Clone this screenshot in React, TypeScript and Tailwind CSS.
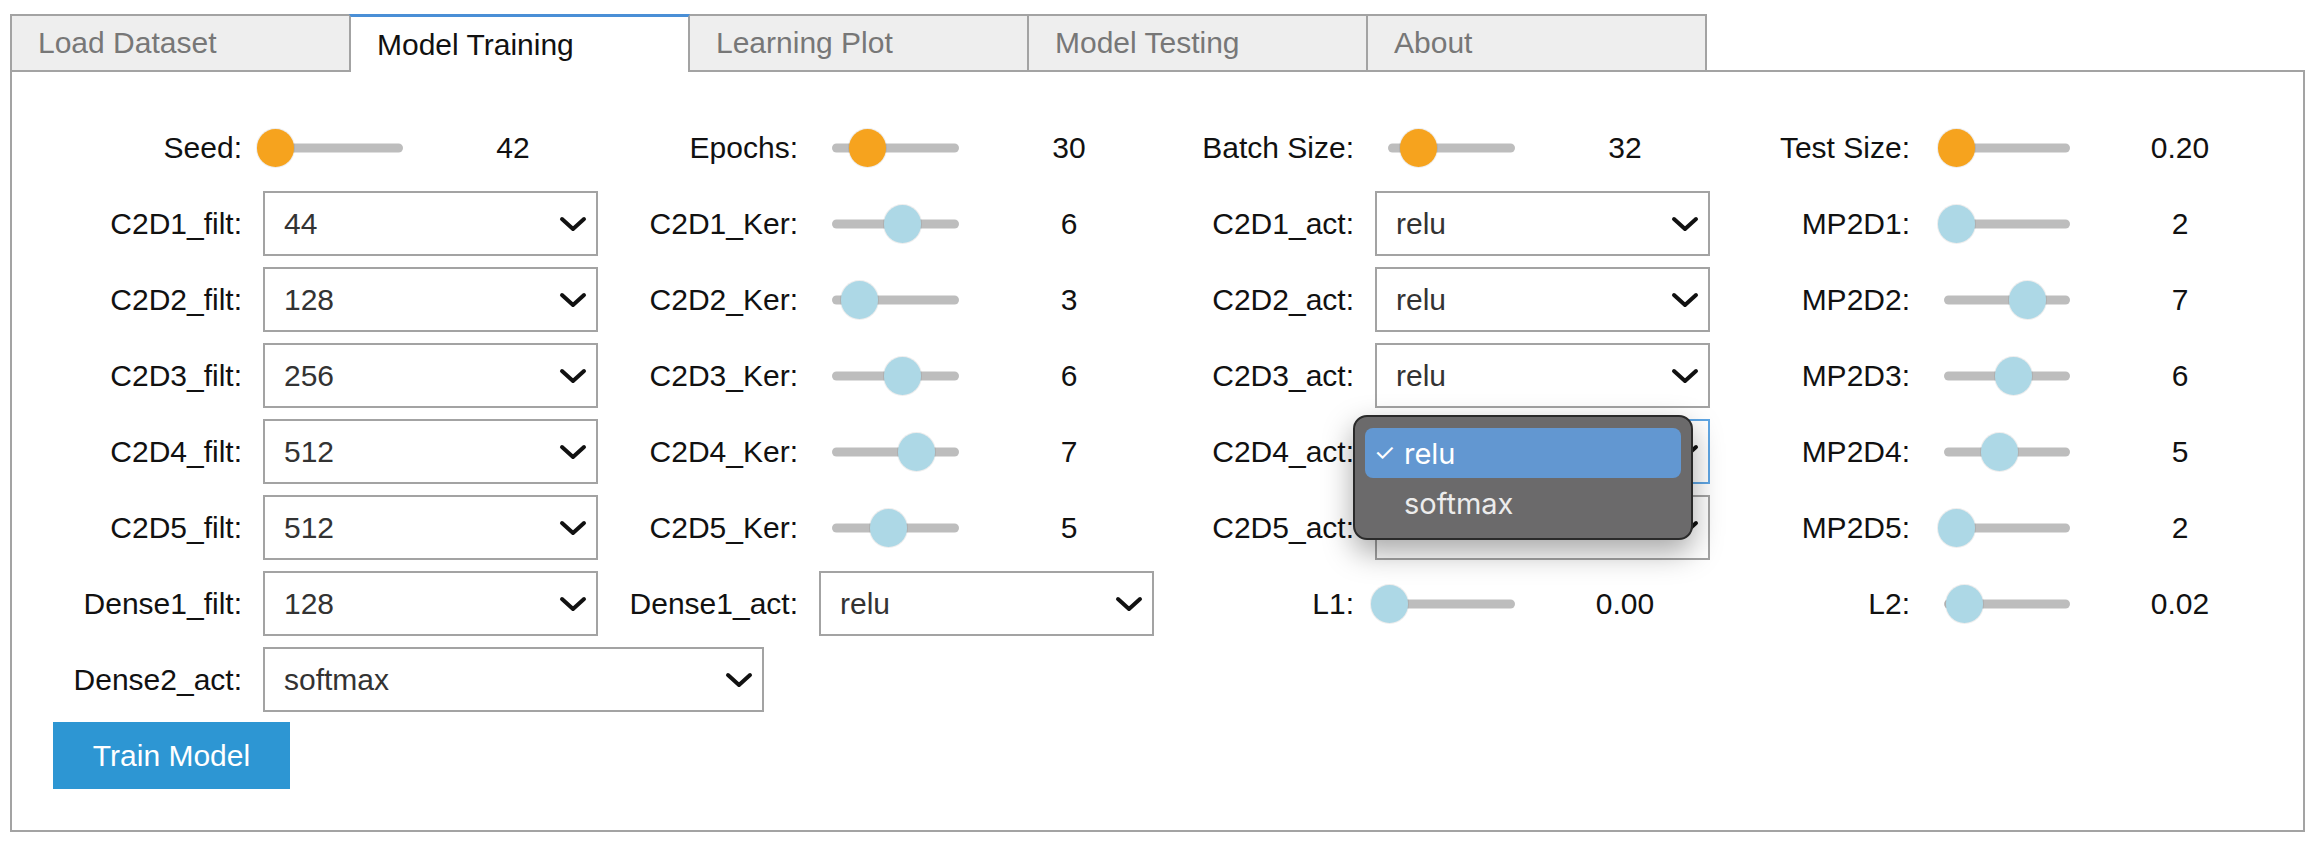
import React from "react";

const FONT = '"Liberation Sans", Arial, Helvetica, sans-serif';
const POPFONT = 'Inter, "Liberation Sans", Arial, sans-serif';

function Chevron() {
  return (
    <svg width="28" height="18" viewBox="0 0 28 18" className="shrink-0">
      <polyline
        points="3,4 14,14 25,4"
        fill="none"
        stroke="#111"
        strokeWidth="4"
        strokeLinecap="round"
        strokeLinejoin="round"
      />
    </svg>
  );
}

type SliderProps = {
  label: string;
  trackClass: string;
  thumb: number;
  value: string;
  orange?: boolean;
};

function Slider({ label, trackClass, thumb, value, orange }: SliderProps) {
  return (
    <div className="flex h-[65px] items-center">
      <div className="w-[229px] shrink-0 text-right text-[#111]">{label}</div>
      <div className="w-[21px] shrink-0" />
      <div className={"relative h-[65px] shrink-0 " + trackClass}>
        <div className="absolute left-0 right-0 top-1/2 h-[9px] -translate-y-1/2 rounded-full bg-[#bdbdbd]" />
        <div
          className={
            "absolute top-1/2 h-[38px] w-[37px] -translate-y-1/2 rounded-full shadow-[0_0_0_1px_rgba(0,0,0,0.07)] " +
            (orange ? "bg-[#f6a31e]" : "bg-[#add8e6]")
          }
          style={{ left: `${thumb - 18.5}px` }}
        />
      </div>
      <div className="w-[220px] shrink-0 text-center text-[#111]">{value}</div>
    </div>
  );
}

type SelectProps = {
  label: string;
  value: string;
  wide?: boolean;
  focused?: boolean;
};

function Select({ label, value, wide, focused }: SelectProps) {
  return (
    <div className="flex h-[65px] items-center">
      <div className="w-[229px] shrink-0 text-right text-[#111]">{label}</div>
      <div className="w-[21px] shrink-0" />
      <div
        className={
          "flex h-[65px] shrink-0 items-center justify-between border-2 bg-white pl-[19px] pr-[9px] text-[#333] " +
          (wide ? "w-[501px] " : "w-[335px] ") +
          (focused ? "border-[#5fa6e4]" : "border-[#a3a3a3]")
        }
      >
        <span>{value}</span>
        <Chevron />
      </div>
    </div>
  );
}

const tabs = ["Load Dataset", "Model Training", "Learning Plot", "Model Testing", "About"];

export default function App() {
  return (
    <div
      className="relative h-[844px] w-[2322px] overflow-hidden bg-white text-[30px] leading-none"
      style={{ fontFamily: FONT }}
    >
      <div className="pl-[10px] pr-[17px] pt-[14px]">
        <div className="relative z-10 flex h-[58px]">
          {tabs.map((t, i) => {
            const active = i === 1;
            return (
              <div
                key={t}
                className={
                  "flex h-[58px] w-[341px] shrink-0 items-center pl-[26px] " +
                  (i > 0 ? "-ml-[2px] " : "") +
                  (active
                    ? "z-10 border-x-2 border-b-0 border-t-[3px] border-x-[#a3a3a3] border-t-[#4a8fd6] bg-white text-[#111]"
                    : "border-2 border-[#a3a3a3] bg-[#eeeeee] text-[#777]")
                }
              >
                {t}
              </div>
            );
          })}
        </div>
        <div className="-mt-[2px] h-[762px] border-2 border-[#a3a3a3] pt-[43px]">
          <div className="ml-[1px] grid grid-cols-[556px_556px_556px_556px] gap-y-[11px]">
            {/* row 0 */}
            <Slider label="Seed:" trackClass="w-[140px]" thumb={12} value="42" orange />
            <Slider label="Epochs:" trackClass="ml-[13px] w-[127px]" thumb={35} value="30" orange />
            <Slider label="Batch Size:" trackClass="ml-[13px] w-[127px]" thumb={30} value="32" orange />
            <Slider label="Test Size:" trackClass="ml-[13px] w-[126px]" thumb={12} value="0.20" orange />
            {/* row 1 */}
            <Select label="C2D1_filt:" value="44" />
            <Slider label="C2D1_Ker:" trackClass="ml-[13px] w-[127px]" thumb={70} value="6" />
            <Select label="C2D1_act:" value="relu" />
            <Slider label="MP2D1:" trackClass="ml-[13px] w-[126px]" thumb={12} value="2" />
            {/* row 2 */}
            <Select label="C2D2_filt:" value="128" />
            <Slider label="C2D2_Ker:" trackClass="ml-[13px] w-[127px]" thumb={27} value="3" />
            <Select label="C2D2_act:" value="relu" />
            <Slider label="MP2D2:" trackClass="ml-[13px] w-[126px]" thumb={83} value="7" />
            {/* row 3 */}
            <Select label="C2D3_filt:" value="256" />
            <Slider label="C2D3_Ker:" trackClass="ml-[13px] w-[127px]" thumb={70} value="6" />
            <Select label="C2D3_act:" value="relu" />
            <Slider label="MP2D3:" trackClass="ml-[13px] w-[126px]" thumb={69} value="6" />
            {/* row 4 */}
            <Select label="C2D4_filt:" value="512" />
            <Slider label="C2D4_Ker:" trackClass="ml-[13px] w-[127px]" thumb={84} value="7" />
            <Select label="C2D4_act:" value="relu" focused />
            <Slider label="MP2D4:" trackClass="ml-[13px] w-[126px]" thumb={55} value="5" />
            {/* row 5 */}
            <Select label="C2D5_filt:" value="512" />
            <Slider label="C2D5_Ker:" trackClass="ml-[13px] w-[127px]" thumb={56} value="5" />
            <Select label="C2D5_act:" value="relu" />
            <Slider label="MP2D5:" trackClass="ml-[13px] w-[126px]" thumb={12} value="2" />
            {/* row 6 */}
            <Select label="Dense1_filt:" value="128" />
            <Select label="Dense1_act:" value="relu" />
            <Slider label="L1:" trackClass="ml-[2px] w-[138px]" thumb={12} value="0.00" />
            <Slider label="L2:" trackClass="ml-[13px] w-[126px]" thumb={20} value="0.02" />
            {/* row 7 */}
            <div className="col-span-2">
              <Select label="Dense2_act:" value="softmax" wide />
            </div>
          </div>
          <button className="ml-[41px] mt-[10px] flex h-[67px] w-[237px] items-center justify-center bg-[#2d96d3] text-white">
            Train Model
          </button>
        </div>
      </div>

      {/* open dropdown menu */}
      <div
        className="absolute left-[1353px] top-[415px] z-20 h-[125px] w-[340px] rounded-[14px] border-2 border-[#2a2a2a] bg-[#6b6a6b] px-[10px] py-[11px] text-[29px] shadow-[0_12px_30px_rgba(0,0,0,0.35)]"
        style={{ fontFamily: POPFONT }}
      >
        <div className="flex h-[50px] items-center rounded-[8px] bg-[#6297d1] text-white">
          <span className="w-[39px] shrink-0 pl-[9px] text-[24px]">✓</span>
          <span>relu</span>
        </div>
        <div className="flex h-[50px] items-center pl-[39px] text-[#ececec]">softmax</div>
      </div>
    </div>
  );
}
